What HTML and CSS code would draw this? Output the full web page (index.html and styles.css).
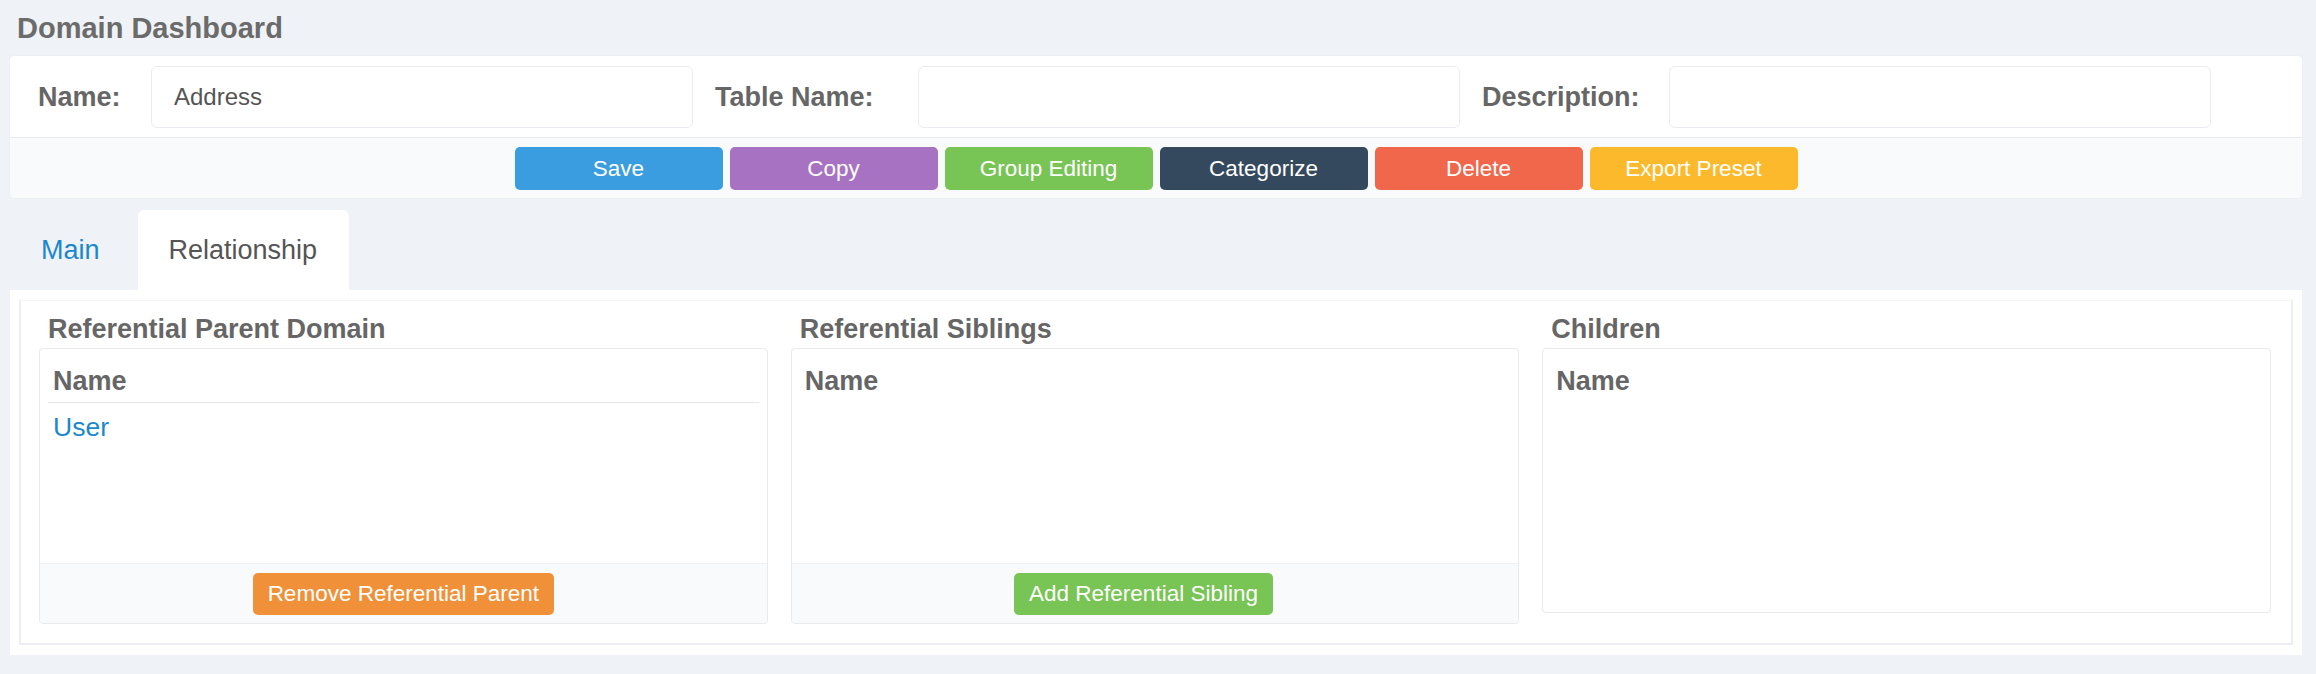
FILE: index.html
```html
<!DOCTYPE html>
<html lang="en">
<head>
    <meta charset="UTF-8">
    <title>Domain Dashboard</title>
    <link rel="stylesheet" href="styles.css">
</head>
<body>
    <div class="page-title">Domain Dashboard</div>

    <div class="card">
        <div class="form-row">
            <label class="field-label" for="nameInput">Name:</label>
            <input class="field-input" id="nameInput" type="text" value="Address">
            <label class="field-label" for="tableInput">Table Name:</label>
            <input class="field-input" id="tableInput" type="text">
            <label class="field-label" for="descInput">Description:</label>
            <input class="field-input" id="descInput" type="text">
        </div>
        <div class="action-row">
            <button class="btn btn-blue">Save</button>
            <button class="btn btn-purple">Copy</button>
            <button class="btn btn-green">Group Editing</button>
            <button class="btn btn-navy">Categorize</button>
            <button class="btn btn-red">Delete</button>
            <button class="btn btn-yellow">Export Preset</button>
        </div>
    </div>

    <div class="tabs">
        <a class="tab" href="#">Main</a>
        <a class="tab active" href="#">Relationship</a>
    </div>

    <div class="tab-content">
        <div class="tab-pane">
            <div class="relation">
                <div class="relation-title">Referential Parent Domain</div>
                <div class="relation-box">
                    <div class="relation-list">
                        <table>
                            <thead>
                                <tr><th>Name</th></tr>
                            </thead>
                            <tbody>
                                <tr><td><a href="#">User</a></td></tr>
                            </tbody>
                        </table>
                    </div>
                    <div class="relation-footer">
                        <button class="btn btn-small btn-orange">Remove Referential Parent</button>
                    </div>
                </div>
            </div>

            <div class="relation">
                <div class="relation-title">Referential Siblings</div>
                <div class="relation-box">
                    <div class="relation-list">
                        <table>
                            <thead>
                                <tr><th>Name</th></tr>
                            </thead>
                        </table>
                    </div>
                    <div class="relation-footer">
                        <button class="btn btn-small btn-green btn-shift">Add Referential Sibling</button>
                    </div>
                </div>
            </div>

            <div class="relation">
                <div class="relation-title">Children</div>
                <div class="relation-box">
                    <div class="relation-list tall">
                        <table>
                            <thead>
                                <tr><th>Name</th></tr>
                            </thead>
                        </table>
                    </div>
                </div>
            </div>
        </div>
    </div>
</body>
</html>
```

FILE: styles.css
```css
body {
    font-family: "Liberation Sans", Arial, sans-serif;
    background-color: #eff2f6;
    color: #666;
    margin: 0;
    padding: 0 14px 0 10px;
}
.page-title {
    font-size: 29px;
    font-weight: bold;
    line-height: 56px;
    padding-left: 7px;
    color: #6b6b6b;
}
.card {
    background-color: white;
    border-radius: 4px;
    box-shadow: 0 0 1px rgba(0, 0, 0, 0.12);
    overflow: hidden;
}
.form-row {
    display: grid;
    grid-template-columns: 113px 542px 225px 542px 209px 542px;
    align-items: center;
    padding: 10px 0 9px 28px;
    border-bottom: 1px solid #e6eaef;
}
.field-label {
    font-size: 27px;
    font-weight: bold;
    color: #666;
}
.field-label + .field-input + .field-label {
    padding-left: 22px;
}
.field-input {
    box-sizing: border-box;
    height: 62px;
    padding: 0 22px;
    font-family: inherit;
    font-size: 24px;
    color: #555;
    border: 1px solid #e9ecf0;
    border-radius: 6px;
    outline: none;
}
.action-row {
    display: flex;
    justify-content: center;
    gap: 7px;
    padding: 9px 0 8px;
    background-color: #f8fafc;
}
.btn {
    width: 208px;
    height: 43px;
    border: none;
    border-radius: 5px;
    color: white;
    font-family: inherit;
    font-size: 22.5px;
    cursor: pointer;
}
.btn-small {
    width: auto;
    height: 42px;
    padding: 0 15px;
}
.btn-shift {
    margin-right: 23px;
}
.btn-blue { background-color: #3a9de0; }
.btn-purple { background-color: #a872c2; }
.btn-green { background-color: #78c455; }
.btn-navy { background-color: #35495e; }
.btn-red { background-color: #f1674b; }
.btn-yellow { background-color: #fcb92c; }
.btn-orange { background-color: #f0913a; }
.tabs {
    display: flex;
    margin-top: 12px;
}
.tab {
    height: 80px;
    line-height: 80px;
    padding: 0 32px 0 31px;
    margin-right: 6px;
    font-size: 27px;
    color: #1a88cb;
    text-decoration: none;
    border-radius: 6px 6px 0 0;
}
.tab.active {
    background-color: white;
    color: #555;
}
.tab-content {
    background-color: white;
    padding: 10px 9px;
    box-shadow: 0 1px 1px rgba(0, 0, 0, 0.06);
}
.tab-pane {
    display: grid;
    grid-template-columns: 1fr 1fr 1fr;
    gap: 23px;
    align-items: start;
    padding: 13px 20px 19px 18px;
    border: 2px solid #eceef1;
    border-top: 1px solid #f3f4f6;
}
.relation-title {
    font-size: 27px;
    font-weight: bold;
    line-height: 30px;
    padding-left: 9px;
    margin-bottom: 4px;
    color: #666;
}
.relation-box {
    border: 1px solid #e8eaed;
    border-radius: 4px;
    overflow: hidden;
}
.relation-list {
    min-height: 214px;
    padding: 0 8px;
}
.relation-list.tall {
    min-height: 263px;
}
.relation-list table {
    width: 100%;
    border-collapse: collapse;
}
.relation-list th {
    text-align: left;
    font-size: 27px;
    line-height: 30px;
    padding: 17px 5px 6px;
    color: #666;
}
.relation-list td {
    font-size: 26.5px;
    line-height: 30px;
    padding: 9px 5px;
    border-top: 1px solid #e3e5e8;
}
.relation-list td a {
    color: #1a88cb;
    text-decoration: none;
}
.relation-footer {
    display: flex;
    justify-content: center;
    padding: 9px 0 8px;
    background-color: #f9fafc;
    border-top: 1px solid #eef0f3;
}
```
